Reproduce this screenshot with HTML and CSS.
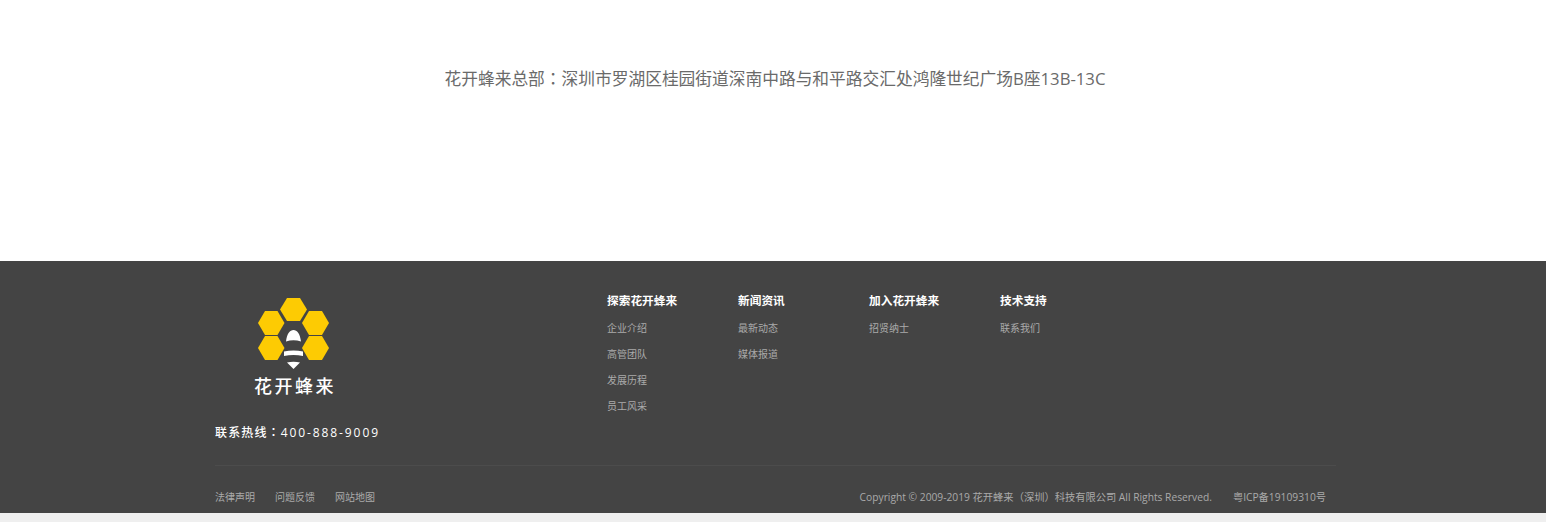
FILE: index.html
```html
<!DOCTYPE html>
<html lang="zh-CN">
<head>
<meta charset="utf-8">
<title>花开蜂来</title>
<link rel="stylesheet" href="styles.css">
</head>
<body>
<main class="address">
  <p class="address-text">花开蜂来总部<span class="punct" lang="zh-TW">：</span>深圳市罗湖区桂园街道深南中路与和平路交汇处鸿隆世纪广场B座13B-13C</p>
</main>
<footer class="footer">
  <div class="footer-inner">
    <div class="footer-top">
      <div class="brand">
        <div class="logo">
          <svg class="logo-mark" width="72" height="72" viewBox="0 0 72 72" aria-hidden="true">
            <g fill="#fdcb03">
              <polygon points="29,0 42,0 49,11.500 42,23 29,23 22,11.500"/>
              <polygon points="7,13 19.500,13 26.500,25 19.500,37 7,37 0,25"/>
              <polygon points="51,13 64,13 71,25 64,37 51,37 44,25"/>
              <polygon points="7,38 19.500,38 26.500,50 19.500,62 7,62 0,50"/>
              <polygon points="51,38 64,38 71,50 64,62 51,62 44,50"/>
            </g>
            <g fill="#fff">
              <path d="M28 43.500 C29 35.500 32 32 35.500 32 C39 32 42 35.500 43 43.500 C38 41.800 33 41.800 28 43.500 Z"/>
              <path d="M26 53.500 C32 52 39 52 45 53.500 L45 58 C39 56.500 32 56.500 26 58 L26 53.500 Z"/>
              <path d="M29 64.500 C33 63.600 38 63.600 42 64.500 L35.500 71 Z"/>
            </g>
          </svg>
          <div class="logo-name">花开蜂来</div>
        </div>
        <div class="hotline">联系热线<span class="punct" lang="zh-TW">：</span><span class="hotline-num">400-888-9009</span></div>
      </div>
      <nav class="nav">
        <div class="nav-col">
          <h3 class="nav-title">探索花开蜂来</h3>
          <a class="nav-link">企业介绍</a>
          <a class="nav-link">高管团队</a>
          <a class="nav-link">发展历程</a>
          <a class="nav-link">员工风采</a>
        </div>
        <div class="nav-col">
          <h3 class="nav-title">新闻资讯</h3>
          <a class="nav-link">最新动态</a>
          <a class="nav-link">媒体报道</a>
        </div>
        <div class="nav-col">
          <h3 class="nav-title">加入花开蜂来</h3>
          <a class="nav-link">招贤纳士</a>
        </div>
        <div class="nav-col">
          <h3 class="nav-title">技术支持</h3>
          <a class="nav-link">联系我们</a>
        </div>
      </nav>
    </div>
    <div class="footer-bottom">
      <div class="legal">
        <a class="legal-link">法律声明</a>
        <a class="legal-link">问题反馈</a>
        <a class="legal-link">网站地图</a>
      </div>
      <div class="copy">
        <span>Copyright © 2009-2019 花开蜂来<span class="punct" lang="zh-TW">（</span>深圳<span class="punct" lang="zh-TW">）</span>科技有限公司 All Rights Reserved.</span>
        <span>粤ICP备19109310号</span>
      </div>
    </div>
  </div>
</footer>
</body>
</html>
```

FILE: styles.css
```css
* {
  box-sizing: border-box;
}

html,
body {
  margin: 0;
  padding: 0;
}

body {
  height: 522px;
  overflow: hidden;
  background: #efefef;
  font-family: "Open Sans", "Noto Sans CJK SC", "Liberation Sans", sans-serif;
}

.punct {
  font-family: "Noto Sans CJK TC", sans-serif;
}

.address {
  height: 261px;
  padding: 66px 0 0 4px;
  background: #fff;
}

.address-text {
  margin: 0;
  font-size: 16.73px;
  line-height: 24px;
  font-weight: 400;
  color: #6a6a6a;
  text-align: center;
}

.footer {
  height: 252px;
  background: #444;
}

.footer-inner {
  width: 1121px;
  margin-left: 215px;
}

.footer-top {
  display: flex;
  height: 205px;
  border-bottom: 1px solid #4c4c4c;
}

.brand {
  width: 392px;
  padding-top: 37px;
}

.logo {
  width: 158px;
  display: flex;
  flex-direction: column;
  align-items: center;
}

.logo-mark {
  display: block;
}

.logo-name {
  margin-top: 4px;
  font-size: 18px;
  line-height: 24px;
  letter-spacing: 2.5px;
  padding-left: 2px;
  font-weight: 500;
  color: #fff;
}

.hotline {
  margin-top: 25px;
  font-size: 12px;
  line-height: 18px;
  letter-spacing: 1.15px;
  font-weight: 500;
  color: #fff;
}

.hotline-num {
  letter-spacing: 1.9px;
}

.nav {
  display: flex;
  padding-top: 30px;
}

.nav-col {
  width: 131px;
  display: flex;
  flex-direction: column;
}

.nav-title {
  margin: 0 0 6px;
  font-size: 11.7px;
  line-height: 18px;
  font-weight: 700;
  color: #fff;
}

.nav-link {
  font-size: 10px;
  line-height: 26px;
  color: #aaa;
}

.footer-bottom {
  display: flex;
  justify-content: space-between;
  padding: 23px 10px 0 0;
  line-height: 16px;
}

.legal {
  display: flex;
  gap: 20px;
}

.legal-link {
  font-size: 10px;
  color: #aaa;
}

.copy {
  display: flex;
  gap: 21px;
  font-size: 10.26px;
  color: #aaa;
}
```
